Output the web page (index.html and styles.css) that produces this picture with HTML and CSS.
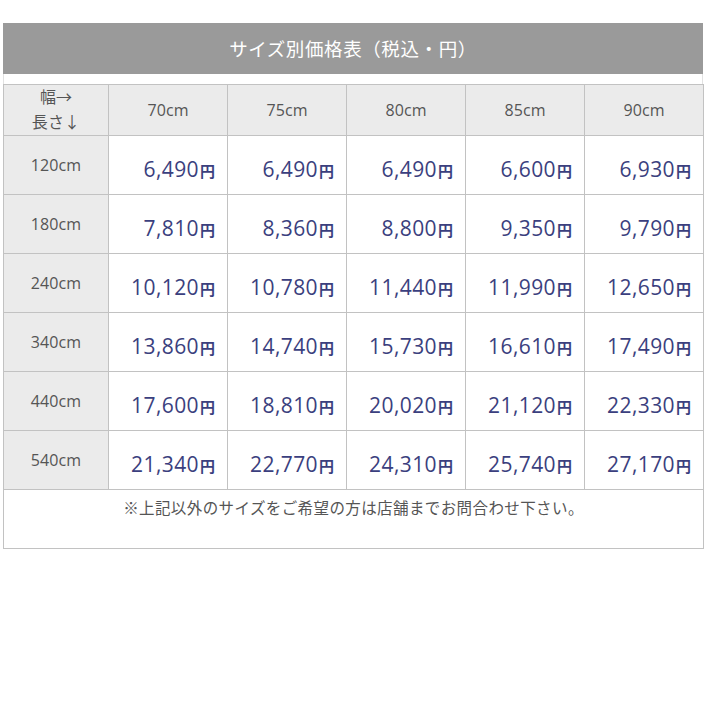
FILE: index.html
```html
<!DOCTYPE html>
<html lang="ja">
<head>
<meta charset="utf-8">
<title>サイズ別価格表</title>
<link rel="stylesheet" href="styles.css">
</head>
<body>
<div class="price-table">
  <div class="title">サイズ別価格表（税込・円）</div>
  <div class="gap"></div>
  <table class="grid">
    <colgroup>
      <col class="c-first"><col class="c-w"><col class="c-w"><col class="c-w"><col class="c-w"><col class="c-w">
    </colgroup>
    <tr class="head">
      <th class="corner">幅→<br>長さ↓</th>
      <th>70cm</th><th>75cm</th><th>80cm</th><th>85cm</th><th>90cm</th>
    </tr>
    <tr>
      <th class="len">120cm</th>
      <td><span class="num">6,490</span><span class="yen">円</span></td>
      <td><span class="num">6,490</span><span class="yen">円</span></td>
      <td><span class="num">6,490</span><span class="yen">円</span></td>
      <td><span class="num">6,600</span><span class="yen">円</span></td>
      <td><span class="num">6,930</span><span class="yen">円</span></td>
    </tr>
    <tr>
      <th class="len">180cm</th>
      <td><span class="num">7,810</span><span class="yen">円</span></td>
      <td><span class="num">8,360</span><span class="yen">円</span></td>
      <td><span class="num">8,800</span><span class="yen">円</span></td>
      <td><span class="num">9,350</span><span class="yen">円</span></td>
      <td><span class="num">9,790</span><span class="yen">円</span></td>
    </tr>
    <tr>
      <th class="len">240cm</th>
      <td><span class="num">10,120</span><span class="yen">円</span></td>
      <td><span class="num">10,780</span><span class="yen">円</span></td>
      <td><span class="num">11,440</span><span class="yen">円</span></td>
      <td><span class="num">11,990</span><span class="yen">円</span></td>
      <td><span class="num">12,650</span><span class="yen">円</span></td>
    </tr>
    <tr>
      <th class="len">340cm</th>
      <td><span class="num">13,860</span><span class="yen">円</span></td>
      <td><span class="num">14,740</span><span class="yen">円</span></td>
      <td><span class="num">15,730</span><span class="yen">円</span></td>
      <td><span class="num">16,610</span><span class="yen">円</span></td>
      <td><span class="num">17,490</span><span class="yen">円</span></td>
    </tr>
    <tr>
      <th class="len">440cm</th>
      <td><span class="num">17,600</span><span class="yen">円</span></td>
      <td><span class="num">18,810</span><span class="yen">円</span></td>
      <td><span class="num">20,020</span><span class="yen">円</span></td>
      <td><span class="num">21,120</span><span class="yen">円</span></td>
      <td><span class="num">22,330</span><span class="yen">円</span></td>
    </tr>
    <tr>
      <th class="len">540cm</th>
      <td><span class="num">21,340</span><span class="yen">円</span></td>
      <td><span class="num">22,770</span><span class="yen">円</span></td>
      <td><span class="num">24,310</span><span class="yen">円</span></td>
      <td><span class="num">25,740</span><span class="yen">円</span></td>
      <td><span class="num">27,170</span><span class="yen">円</span></td>
    </tr>
    <tr class="note-row">
      <td colspan="6" class="note">※上記以外のサイズをご希望の方は店舗までお問合わせ下さい。</td>
    </tr>
  </table>
</div>
</body>
</html>
```
FILE: styles.css
```css
html, body {
  margin: 0;
  padding: 0;
  background: #ffffff;
}

body {
  font-family: "Open Sans", "Noto Sans CJK JP", sans-serif;
  color: #555555;
}

.price-table {
  width: 700px;
  margin: 23px 0 0 3px;
}

.title {
  height: 51px;
  line-height: 51px;
  background: #9a9a9a;
  color: #ffffff;
  text-align: center;
  font-size: 18.5px;
  letter-spacing: 0.6px;
}

.gap {
  height: 10px;
  border-left: 1px solid #e2e2e2;
  border-right: 1px solid #e2e2e2;
  box-sizing: border-box;
}

.grid {
  width: 700px;
  border-collapse: collapse;
  table-layout: fixed;
}

.c-first { width: 105px; }
.c-w { width: 119px; }

.grid th,
.grid td {
  border: 1px solid #c2c2c2;
  padding: 0;
}

.grid th {
  background: #ebebeb;
  color: #555555;
  font-weight: normal;
  font-size: 16px;
  letter-spacing: 0.1px;
  text-align: center;
  vertical-align: middle;
}

.corner {
  line-height: 25px;
}

.grid tr {
  height: 59px;
}

.grid tr.head {
  height: 51px;
}

.grid td {
  text-align: right;
  padding: 7px 12px 0 0;
  color: #3b3f7e;
  vertical-align: middle;
  white-space: nowrap;
}

.num {
  font-size: 21px;
  letter-spacing: 0.4px;
}

.yen {
  font-size: 15px;
  font-weight: bold;
  margin-left: 1px;
}

.grid td.note {
  text-align: center;
  vertical-align: top;
  padding: 7px 0 0 0;
  color: #555555;
  font-size: 15.5px;
  line-height: 22px;
  letter-spacing: 0.4px;
}
```
